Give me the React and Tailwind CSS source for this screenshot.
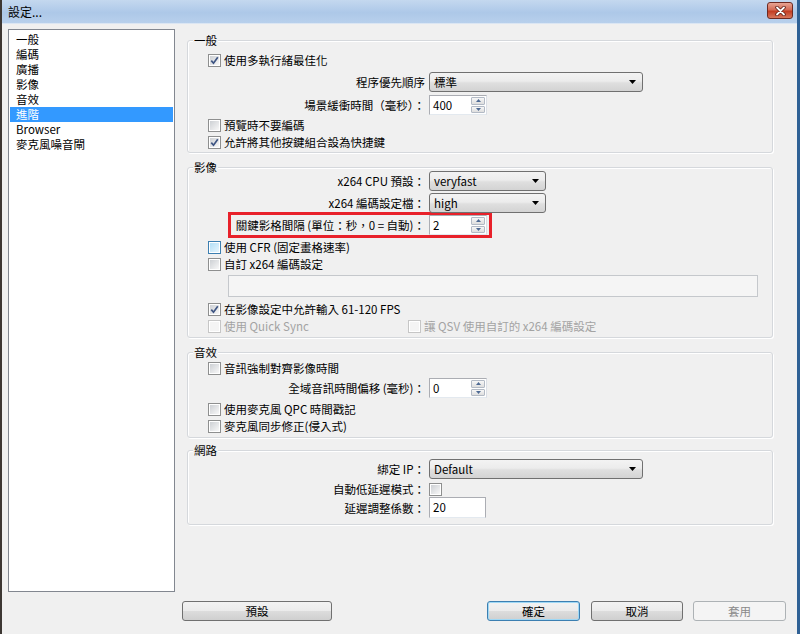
import React from "react";

function Check({ checked = false, disabled = false, hot = false }) {
  const outer = disabled
    ? "border-[#c6c6c6]"
    : hot
    ? "border-[#3c7fb1]"
    : "border-[#8e8f8f]";
  const inner = disabled
    ? "bg-[#f4f4f4]"
    : hot
    ? "bg-[linear-gradient(135deg,#b3dff6,#e6f5fd)]"
    : "bg-[linear-gradient(135deg,#cdd0d4,#f8f8f8)]";
  return (
    <span className={`flex w-[13px] h-[13px] shrink-0 border ${outer} bg-white p-[1px]`}>
      <span className={`flex items-center justify-center w-full h-full ${inner}`}>
        {checked && (
          <svg width="9" height="9" viewBox="0 0 9 9">
            <path d="M1.3 4.6 L3.5 7.2 L7.8 1.2" fill="none" stroke="#3e5583" strokeWidth="1.7" />
          </svg>
        )}
      </span>
    </span>
  );
}

function CheckRow({ label, checked, disabled, hot, className = "" }) {
  return (
    <div className={`flex items-center h-[16px] ml-[20px] gap-[3px] ${className}`}>
      <Check checked={checked} disabled={disabled} hot={hot} />
      <span className={disabled ? "text-[#a3a3a3]" : "text-black"}>{label}</span>
    </div>
  );
}

function Select({ value, wide = true }) {
  return (
    <div
      className={`flex items-center justify-between h-[20px] ${wide ? "w-[214px]" : "w-[117px]"} rounded-[3px] border border-[#707070] bg-[linear-gradient(#f3f3f3,#ececec_45%,#dfdfdf_55%,#d3d3d3)] pl-[4px] pr-[6px]`}
    >
      <span>{value}</span>
      <svg width="7" height="4" viewBox="0 0 7 4">
        <path d="M0 0H7L3.5 4Z" fill="#000" />
      </svg>
    </div>
  );
}

function Spin({ value }) {
  return (
    <div className="flex h-[20px] w-[58px] border border-[#abadb3] border-b-[#e3e9ef] border-r-[#dbdfe6] bg-white">
      <span className="flex-1 pl-[3px] leading-[18px]">{value}</span>
      <div className="flex flex-col w-[15px] py-[1px] pr-[1px] gap-[1px]">
        <div className="flex-1 flex items-center justify-center border border-[#b3bac5] rounded-[1px] bg-[linear-gradient(#f7f7f7,#dedede)]">
          <svg width="5" height="3" viewBox="0 0 5 3">
            <path d="M0 3H5L2.5 0Z" fill="#4e6a94" />
          </svg>
        </div>
        <div className="flex-1 flex items-center justify-center border border-[#b3bac5] rounded-[1px] bg-[linear-gradient(#f7f7f7,#dedede)]">
          <svg width="5" height="3" viewBox="0 0 5 3">
            <path d="M0 0H5L2.5 3Z" fill="#4e6a94" />
          </svg>
        </div>
      </div>
    </div>
  );
}

function LabelRow({ label, children, className = "" }) {
  return (
    <div className={`flex items-center ${className}`}>
      <span className="w-[237px] text-right whitespace-nowrap">{label}</span>
      <div className="ml-[4px] flex items-center">{children}</div>
    </div>
  );
}

function Group({ title, children, className = "" }) {
  return (
    <div
      className={`border border-[#d5d8dc] rounded-[3px] shadow-[inset_1px_1px_0_#ffffff,1px_1px_0_#ffffff] ${className}`}
    >
      <div className="-mt-[8px] ml-[5px] w-fit px-[1px] h-[15px] leading-[15px] bg-[#f0f0f0]">
        {title}
      </div>
      {children}
    </div>
  );
}

function Btn({ children, w, kind = "normal" }) {
  const cls =
    kind === "default"
      ? "border-[#3c7fb1] shadow-[inset_0_0_0_1px_#9fd8f5] text-black"
      : kind === "disabled"
      ? "border-[#adb2b5] text-[#8a8a8a]"
      : "border-[#707070] text-black";
  const bg =
    kind === "disabled"
      ? "bg-[#f4f4f4]"
      : "bg-[linear-gradient(#f2f2f2,#ebebeb_50%,#dddddd_50%,#cfcfcf)]";
  return (
    <div className={`flex items-center justify-center h-[20px] ${w} rounded-[3px] border ${cls} ${bg}`}>
      {children}
    </div>
  );
}

export default function App() {
  const items = ["一般", "編碼", "廣播", "影像", "音效", "進階", "Browser", "麥克風噪音閘"];
  return (
    <div className="w-[800px] h-[634px] overflow-hidden flex flex-col bg-[#f0f0f0] border-l-[2px] border-l-[#3d3733] border-r-[3px] border-r-[#2f6195] text-[11.5px] leading-[14px] text-black font-['Noto_Sans_CJK_TC',sans-serif]">
      {/* title bar */}
      <div className="flex items-center h-[24px] shrink-0 bg-[linear-gradient(#c4d8ef,#adc8e8_55%,#b8d0ec)] border-b border-b-[#dbe6f3]">
        <span className="ml-[6px] text-[12px] text-black">設定...</span>
        <div className="ml-auto mr-[4px] mb-[2px] flex items-center justify-center w-[26px] h-[17px] rounded-[3px] border border-[#6e2a22] bg-[linear-gradient(#e8a493,#d46b55_45%,#c23c22_55%,#d8775d)]">
          <svg width="11" height="10" viewBox="0 0 11 10">
            <path d="M2 1.5L9 8.5M9 1.5L2 8.5" stroke="#5a1a12" strokeWidth="3.4" strokeLinecap="round" />
            <path d="M2 1.5L9 8.5M9 1.5L2 8.5" stroke="#ffffff" strokeWidth="1.8" strokeLinecap="round" />
          </svg>
        </div>
      </div>

      {/* main */}
      <div className="flex pt-[5px] shrink-0">
        <div className="ml-[6px] w-[167px] h-[563px] border border-[#828790] bg-white pt-[2px] px-[1px]">
          {items.map((it) => (
            <div
              key={it}
              className={`h-[15px] leading-[15px] pl-[6px] ${it === "進階" ? "bg-[#3399ff] text-white" : "text-black"}`}
            >
              {it}
            </div>
          ))}
        </div>

        <div className="ml-[12px] w-[586px] mt-[11px] flex flex-col">
          {/* 一般 */}
          <Group title="一般" className="pb-[2px]">
            <CheckRow className="mt-[4px]" label="使用多執行緒最佳化" checked />
            <LabelRow className="mt-[4px]" label="程序優先順序">
              <Select value="標準" />
            </LabelRow>
            <LabelRow className="mt-[3px]" label="場景緩衝時間（毫秒）：">
              <Spin value="400" />
            </LabelRow>
            <CheckRow className="mt-[2px]" label="預覽時不要編碼" />
            <CheckRow className="mt-[1px]" label="允許將其他按鍵組合設為快捷鍵" checked />
          </Group>

          {/* 影像 */}
          <Group title="影像" className="mt-[14px] pb-[3px]">
            <LabelRow className="-mt-[4px]" label="x264 CPU 預設：">
              <Select value="veryfast" wide={false} />
            </LabelRow>
            <LabelRow className="mt-[2px]" label="x264 編碼設定檔：">
              <Select value="high" wide={false} />
            </LabelRow>
            <div className="-mt-[1px] ml-[40px] w-[264px] h-[26px] border-[3px] border-[#e8212a] flex items-center">
              <span className="w-[194px] text-right whitespace-nowrap">關鍵影格間隔 (單位：秒，0 = 自動)：</span>
              <div className="ml-[4px]">
                <Spin value="2" />
              </div>
            </div>
            <CheckRow className="mt-[1px]" label="使用 CFR (固定畫格速率)" hot />
            <CheckRow className="mt-[1px]" label="自訂 x264 編碼設定" />
            <div className="mt-[3px] ml-[40px] w-[530px] h-[22px] border border-[#c5c8cc] bg-[#f5f5f5]" />
            <CheckRow className="mt-[4px]" label="在影像設定中允許輸入 61-120 FPS" checked />
            <div className="flex items-center mt-[1px]">
              <div className="w-[220px]">
                <CheckRow label="使用 Quick Sync" disabled />
              </div>
              <div className="flex items-center h-[16px] gap-[3px]">
                <Check disabled />
                <span className="text-[#a3a3a3]">讓 QSV 使用自訂的 x264 編碼設定</span>
              </div>
            </div>
          </Group>

          {/* 音效 */}
          <Group title="音效" className="mt-[14px] pb-[3px]">
            <CheckRow label="音訊強制對齊影像時間" />
            <LabelRow className="mt-[2px]" label="全域音訊時間偏移 (毫秒)：">
              <Spin value="0" />
            </LabelRow>
            <CheckRow className="mt-[3px]" label="使用麥克風 QPC 時間戳記" />
            <CheckRow className="mt-[1px]" label="麥克風同步修正(侵入式)" />
          </Group>

          {/* 網路 */}
          <Group title="網路" className="mt-[12px] pb-[6px]">
            <LabelRow className="mt-[1px]" label="綁定 IP：">
              <Select value="Default" />
            </LabelRow>
            <LabelRow className="mt-[3px] h-[14px]" label="自動低延遲模式：">
              <Check />
            </LabelRow>
            <LabelRow className="mt-[1px]" label="延遲調整係數：">
              <div className="h-[21px] w-[57px] border border-[#abadb3] border-b-[#e3e9ef] bg-white pl-[3px] leading-[19px]">
                20
              </div>
            </LabelRow>
          </Group>
        </div>
      </div>

      {/* buttons */}
      <div className="flex items-center mt-[9px]">
        <div className="ml-[180px]">
          <Btn w="w-[150px]">預設</Btn>
        </div>
        <div className="ml-[155px]">
          <Btn w="w-[93px]" kind="default">確定</Btn>
        </div>
        <div className="ml-[11px]">
          <Btn w="w-[92px]">取消</Btn>
        </div>
        <div className="ml-[10px]">
          <Btn w="w-[93px]" kind="disabled">套用</Btn>
        </div>
      </div>
    </div>
  );
}
